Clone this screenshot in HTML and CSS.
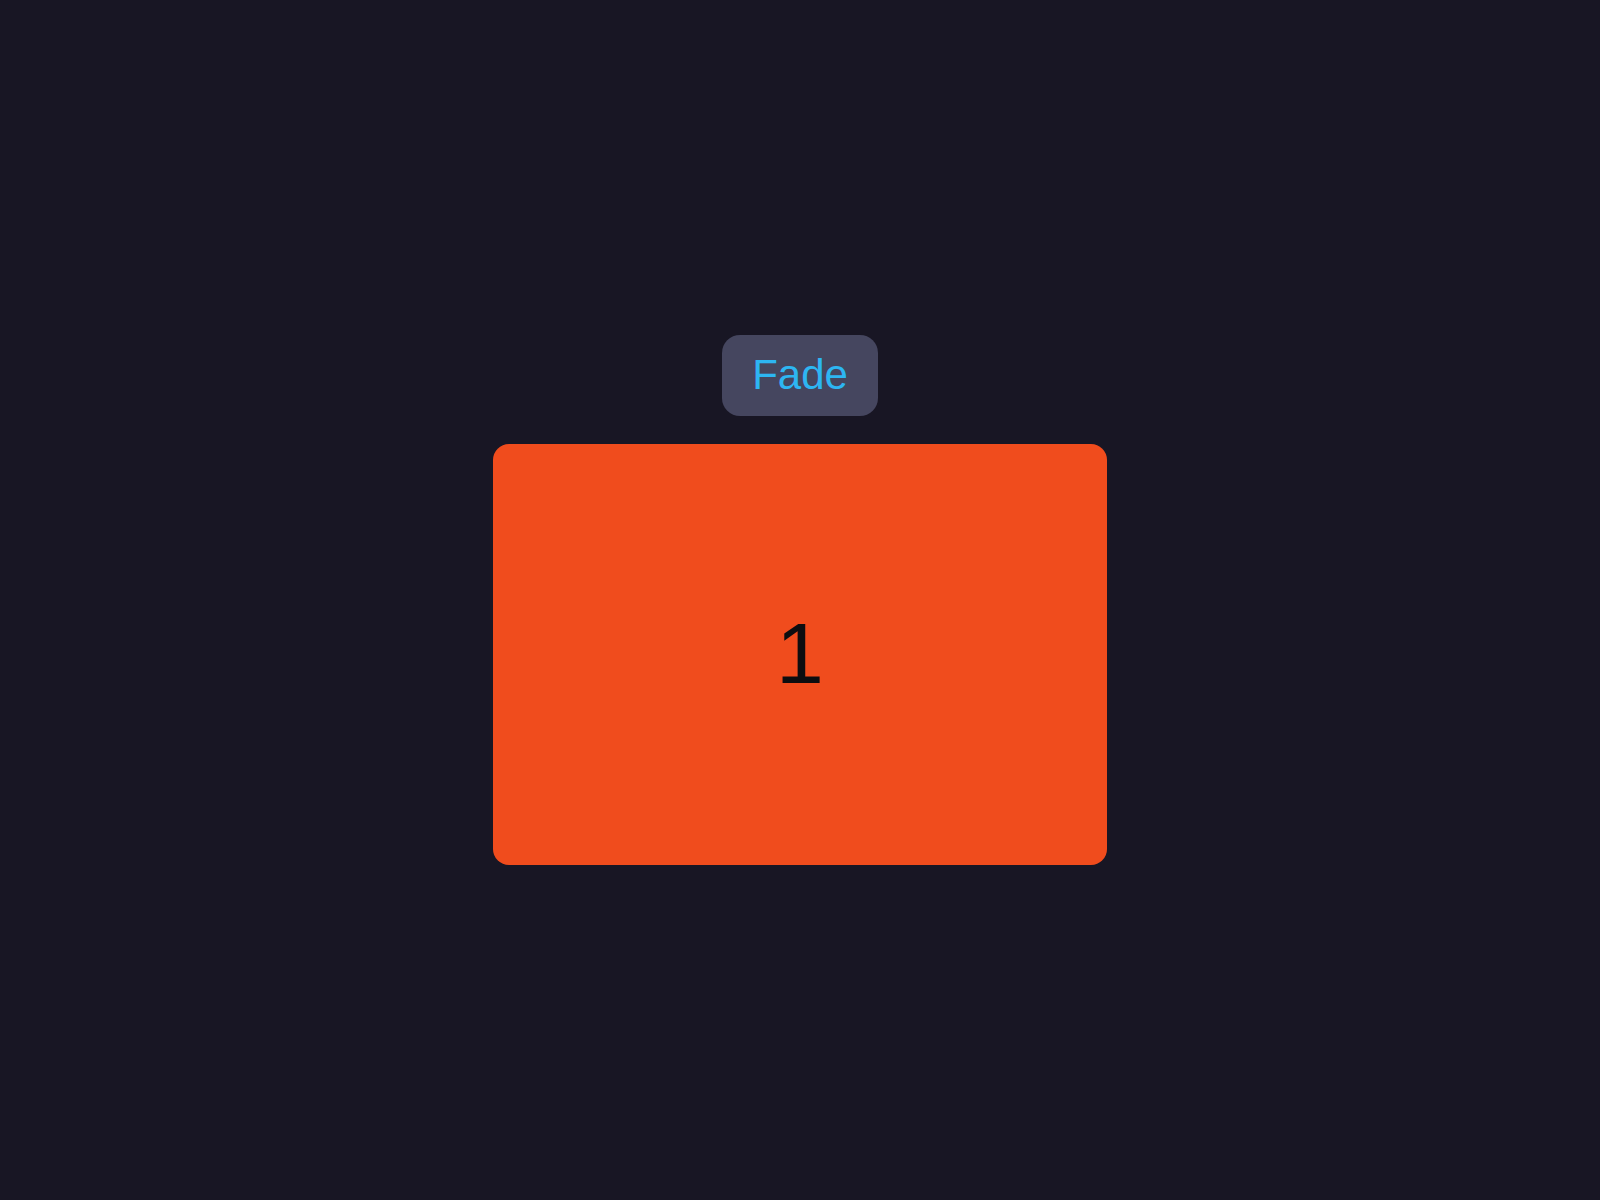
FILE: index.html
```html
<!DOCTYPE html>
<html>
<head>
<meta charset="utf-8">
<link rel="stylesheet" href="styles.css">
</head>
<body>
<main class="stage">
  <button class="fade-btn">Fade</button>
  <div class="card"><span class="card-num">1</span></div>
</main>
</body>
</html>
```
FILE: styles.css
```css
html, body {
  margin: 0;
  height: 100%;
  background: #181624;
  font-family: "Liberation Sans", Arial, sans-serif;
}
.stage {
  height: 100%;
  display: flex;
  flex-direction: column;
  align-items: center;
  justify-content: center;
  gap: 28px;
}
.fade-btn {
  font-family: "Liberation Sans", Arial, sans-serif;
  font-size: 42px;
  line-height: 46px;
  color: #2db6f2;
  background: #45465f;
  border: none;
  border-radius: 18px;
  padding: 17px 0 18px;
  width: 156px;
  height: 81px;
}
.card {
  width: 614px;
  height: 421px;
  background: #f04c1d;
  border-radius: 16px;
  display: flex;
  align-items: center;
  justify-content: center;
}
.card-num {
  font-size: 86px;
  line-height: 1;
  color: #0d0d10;
  padding-bottom: 4px;
}
```
